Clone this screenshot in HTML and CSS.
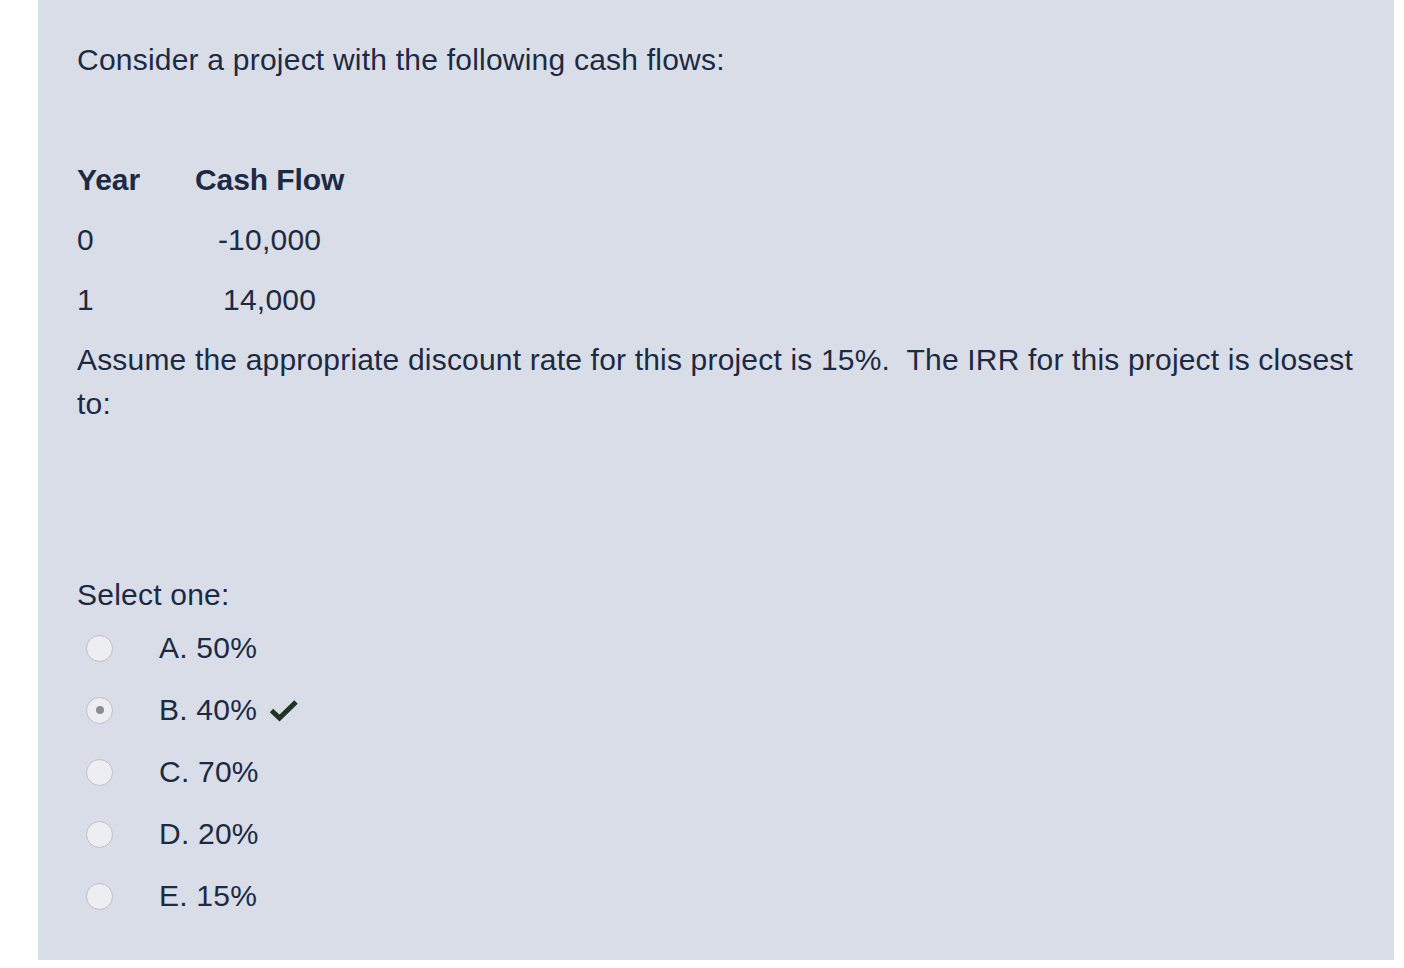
FILE: index.html
```html
<!DOCTYPE html>
<html>
<head>
<meta charset="utf-8">
<link rel="stylesheet" href="styles.css">
</head>
<body>
<div class="panel">
  <p class="intro">Consider a project with the following cash flows:</p>
  <table class="flows">
    <thead>
      <tr><th class="col-year">Year</th><th class="col-cash">Cash Flow</th></tr>
    </thead>
    <tbody>
      <tr><td class="col-year">0</td><td class="col-cash">-10,000</td></tr>
      <tr><td class="col-year">1</td><td class="col-cash">14,000</td></tr>
    </tbody>
  </table>
  <p class="question">Assume the appropriate discount rate for this project is 15%.&nbsp; The IRR for this project is closest to:</p>
  <p class="prompt">Select one:</p>
  <div class="answers">
    <div class="option"><span class="radio"></span><span class="label">A. 50%</span></div>
    <div class="option"><span class="radio checked"></span><span class="label">B. 40%</span>
      <svg class="tick" viewBox="0 0 30 24" width="30" height="24"><path d="M2.5 12.5 L10.5 20 L27 4" fill="none" stroke="#1e3425" stroke-width="5" stroke-linejoin="miter" stroke-linecap="butt"/></svg>
    </div>
    <div class="option"><span class="radio"></span><span class="label">C. 70%</span></div>
    <div class="option"><span class="radio"></span><span class="label">D. 20%</span></div>
    <div class="option"><span class="radio"></span><span class="label">E. 15%</span></div>
  </div>
</div>
</body>
</html>
```
FILE: styles.css
```css
html, body {
  margin: 0;
  padding: 0;
  background: #ffffff;
}
body {
  font-family: "Liberation Sans", Arial, sans-serif;
  font-size: 30px;
  line-height: 44px;
  letter-spacing: 0.22px;
  color: #1d2a44;
}
.panel {
  margin-left: 38px;
  width: 1356px;
  height: 960px;
  box-sizing: border-box;
  padding: 38px 33px 0 39px;
  background: #d8dde7;
}
p {
  margin: 0;
}
.intro {
  margin-bottom: 68px;
}
.flows {
  border-collapse: collapse;
}
.flows th, .flows td {
  padding: 8px 0;
  height: 44px;
  font-weight: normal;
}
.flows th {
  font-weight: bold;
  letter-spacing: -0.1px;
}
.col-year {
  text-align: left;
  width: 118px;
}
.col-cash {
  text-align: center;
}
.question {
  margin-top: 8px;
  letter-spacing: 0.18px;
}
.prompt {
  margin-top: 147px;
}
.answers {
  display: flex;
  flex-direction: column;
  gap: 18px;
  margin-top: 9px;
}
.option {
  display: flex;
  align-items: center;
  height: 44px;
}
.radio {
  width: 25px;
  height: 25px;
  border-radius: 50%;
  border: 1px solid #bcc0c7;
  background: #eceef2;
  margin-left: 9px;
  margin-right: 46px;
  display: flex;
  align-items: center;
  justify-content: center;
}
.radio.checked::after {
  content: "";
  width: 8px;
  height: 8px;
  border-radius: 50%;
  background: #8a8d92;
}
.tick {
  margin-left: 12px;
}
```
